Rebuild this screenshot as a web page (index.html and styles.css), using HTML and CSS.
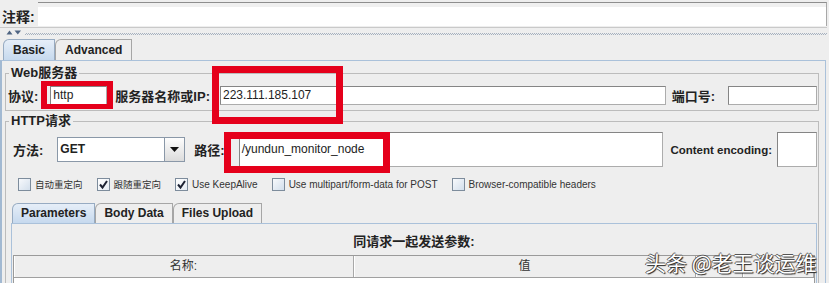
FILE: index.html
```html
<!DOCTYPE html>
<html lang="zh-CN">
<head>
    <meta charset="UTF-8">
    <meta name="viewport" content="width=device-width, initial-scale=1.0">
    <title>HTTP请求</title>
    <link rel="stylesheet" href="styles.css">
</head>
<body>
    <div class="app">
        <div class="note-row">
            <span class="note-label">注释:</span>
            <div class="note-field"></div>
        </div>

        <div class="splitter">
            <svg class="split-arrows" width="16" height="5" viewBox="0 0 16 5">
                <path d="M0.5 4.5 L3.5 0.5 L6.5 4.5 Z"/>
                <path d="M8.5 0.5 L15 0.5 L11.75 4.5 Z"/>
            </svg>
            <div class="split-dots"></div>
        </div>

        <div class="tabs">
            <div class="tab active">Basic</div>
            <div class="tab">Advanced</div>
        </div>

        <div class="tab-panel">
            <fieldset class="group">
                <legend>Web服务器</legend>
                <div class="row server-row">
                    <label>协议:</label>
                    <div class="field f-protocol">http</div>
                    <label class="l-server">服务器名称或IP:</label>
                    <div class="field f-server">223.111.185.107</div>
                    <label class="l-port">端口号:</label>
                    <div class="field f-port"></div>
                </div>
            </fieldset>

            <fieldset class="group group-request">
                <legend>HTTP请求</legend>
                <div class="row request-row">
                    <label>方法:</label>
                    <div class="combo">
                        <span class="combo-value">GET</span>
                        <span class="combo-btn">
                            <svg width="9" height="5" viewBox="0 0 9 5"><path d="M0 0 L9 0 L4.5 5 Z"/></svg>
                        </span>
                    </div>
                    <label class="l-path">路径:</label>
                    <div class="field f-path">/yundun_monitor_node</div>
                    <label class="l-encoding">Content encoding:</label>
                    <div class="field f-encoding"></div>
                </div>

                <div class="checks">
                    <span class="check"><span class="box"></span><span class="cjk">自动重定向</span></span>
                    <span class="check"><span class="box checked"><svg width="11" height="11" viewBox="0 0 11 11"><path d="M2 5.5 L4.5 8.5 L9 2"/></svg></span><span class="cjk">跟随重定向</span></span>
                    <span class="check"><span class="box checked"><svg width="11" height="11" viewBox="0 0 11 11"><path d="M2 5.5 L4.5 8.5 L9 2"/></svg></span>Use KeepAlive</span>
                    <span class="check"><span class="box"></span>Use multipart/form-data for POST</span>
                    <span class="check"><span class="box"></span>Browser-compatible headers</span>
                </div>

                <div class="tabs sub-tabs">
                    <div class="tab active">Parameters</div>
                    <div class="tab">Body Data</div>
                    <div class="tab">Files Upload</div>
                </div>

                <div class="sub-panel">
                    <div class="params-title">同请求一起发送参数:</div>
                    <div class="table">
                        <div class="thead">
                            <div>名称:</div>
                            <div>值</div>
                            <div></div>
                            <div></div>
                        </div>
                    </div>
                </div>
            </fieldset>
        </div>

        <!-- annotation boxes drawn over the form -->
        <div class="mark mark-protocol"></div>
        <div class="mark mark-server"></div>
        <div class="mark mark-path"></div>
        <div class="watermark">头条 @老王谈运维</div>
    </div>
</body>
</html>
```

FILE: styles.css
```css
* {
    box-sizing: border-box;
}
body {
    margin: 0;
    background: #eeeeee;
    color: #222;
    font-family: "Liberation Sans", "Noto Sans CJK SC", sans-serif;
    overflow: hidden;
}
.app {
    position: relative;
    width: 827px;
    height: 283px;
    overflow: hidden;
}

/* comment line */
.note-row {
    display: flex;
    height: 27px;
}
.note-label {
    width: 38px;
    padding-left: 2px;
    margin-top: 9px;
    font-size: 14px;
    font-weight: bold;
    line-height: 16px;
}
.note-field {
    flex: 1;
    margin-top: 2px;
    height: 24px;
    border-top: 1px solid #8e8e8e;
    border-right: 1px solid #a8a8a8;
    background: linear-gradient(#f0f0f0 0 4px, #fff 4px);
}

/* splitter */
.splitter {
    display: flex;
    align-items: center;
    height: 10px;
    border-top: 1px solid #c9c9c9;
    padding-left: 6px;
}
.split-arrows path {
    fill: #4f6482;
}
.split-dots {
    flex: 1;
    height: 2px;
    margin: 2px 0 0 3px;
    background: repeating-conic-gradient(#a6b1bf 0 25%, transparent 0 50%) 0 0 / 2px 2px;
}

/* tabs */
.tabs {
    display: flex;
    height: 21px;
    margin-top: 2px;
    padding-left: 3px;
}
.tab {
    padding: 0 9px;
    font-size: 12px;
    font-weight: bold;
    line-height: 20px;
    color: #222;
    background: #eeeeee;
    border: 1px solid #a6a6a6;
    border-bottom: none;
    border-top-left-radius: 6px;
}
.tab.active {
    background: linear-gradient(#e6eef8, #c6d9ee);
    border-color: #97abc2;
}
.tab-panel {
    height: 240px;
    margin-right: 1px;
    padding: 0 6px 0 3px;
    border: 1px solid #aac1da;
    border-left: 2px solid #a2b9d2;
}

/* titled groups */
.group {
    margin: 5px 0 0;
    padding: 0;
    min-width: 0;
    border: 1px solid #bcbcbc;
}
.group-request {
    margin-top: 3px;
    height: 200px;
}
.group legend {
    margin-left: 3px;
    padding: 0 2px;
    font-size: 13px;
    font-weight: bold;
    line-height: 14px;
}
.row {
    display: flex;
    align-items: center;
}
.row label {
    font-size: 13px;
    font-weight: bold;
    white-space: nowrap;
}
.field {
    height: 19px;
    padding-left: 2px;
    background: #fff;
    border: 1px solid #acacac;
    border-top-color: #858585;
    border-left-color: #858585;
    font-size: 12px;
    line-height: 17px;
    color: #222;
    white-space: nowrap;
}

.server-row {
    height: 30px;
    padding: 6px 1px 5px 2px;
}
.f-protocol {
    width: 57px;
    margin-left: 12px;
}
.l-server {
    margin-left: 8px;
}
.f-server {
    flex: 1;
    margin-left: 10px;
}
.l-port {
    margin-left: 6px;
}
.f-port {
    width: 89px;
    margin-left: 13px;
}

.request-row {
    height: 35px;
    margin-top: 4px;
    padding: 0 1px 0 7px;
}
.combo {
    display: flex;
    width: 128px;
    height: 25px;
    margin-left: 14px;
    background: #fff;
    border: 1px solid #8a98a8;
}
.combo-value {
    flex: 1;
    padding-left: 2px;
    font-size: 12px;
    font-weight: bold;
    line-height: 23px;
}
.combo-btn {
    display: flex;
    align-items: center;
    justify-content: center;
    width: 20px;
    border-left: 1px solid #8a98a8;
    background: linear-gradient(#fdfdfd, #dcdcdc);
}
.combo-btn path {
    fill: #111;
}
.l-path {
    margin-left: 9px;
}
.f-path {
    flex: 1;
    height: 35px;
    margin-left: 14px;
    line-height: 33px;
}
.row .l-encoding {
    margin-left: 7px;
    font-size: 11.5px;
}
.f-encoding {
    width: 40px;
    height: 35px;
    margin-left: 5px;
}

/* check boxes */
.checks {
    display: flex;
    align-items: center;
    gap: 14px;
    height: 16px;
    margin-top: 9px;
    padding-left: 12px;
}
.check {
    display: flex;
    align-items: center;
    gap: 4px;
    font-size: 10px;
    color: #333;
    white-space: nowrap;
}
.check .cjk {
    font-size: 9.5px;
}
.box {
    display: flex;
    align-items: center;
    justify-content: center;
    width: 13px;
    height: 13px;
    border: 1px solid #7d8c9c;
    background: linear-gradient(135deg, #f7f9fc, #d3dfec);
}
.box.checked {
    background: linear-gradient(135deg, #ffffff, #e4ebf3);
}
.box path {
    fill: none;
    stroke: #1c2233;
    stroke-width: 2;
}

/* parameter tabs */
.sub-tabs {
    height: 20px;
    margin-top: 11px;
    padding-left: 6px;
}
.sub-tabs .tab {
    padding: 0 8px;
    line-height: 19px;
}
.sub-panel {
    height: 100px;
    margin: 0 1px 0 5px;
    padding: 0 1px;
    border: 1px solid #aac1da;
}
.params-title {
    padding-top: 10px;
    font-size: 13px;
    font-weight: bold;
    line-height: 16px;
    text-align: center;
}
.table {
    height: 60px;
    margin-top: 5px;
    background: #fff;
    border: 1px solid #9a9a9a;
}
.thead {
    display: grid;
    grid-template-columns: 340px 342px 47px 1fr;
    height: 22px;
    background: #eeeeee;
    border-bottom: 1px solid #a0a0a0;
}
.thead div {
    font-size: 12px;
    line-height: 21px;
    text-align: center;
    color: #333;
    border-right: 1px solid #a8a8a8;
    box-shadow: inset 1px 0 #fff;
}

/* overlays */
.mark {
    position: absolute;
    border: 6px solid #e5001b;
}
.mark-protocol {
    left: 41px;
    top: 81px;
    width: 72px;
    height: 28px;
    border-width: 5px 6px;
}
.mark-server {
    left: 212px;
    top: 66px;
    width: 131px;
    height: 58px;
    border-width: 7px;
}
.mark-path {
    left: 224px;
    top: 132px;
    width: 166px;
    height: 41px;
    border-width: 7px;
}
.watermark {
    position: absolute;
    left: 645px;
    top: 248px;
    font-family: "Noto Sans CJK SC", sans-serif;
    font-size: 21px;
    line-height: 28px;
    color: #fff;
    white-space: nowrap;
    text-shadow: 1px 1px 1px #222, -1px 0 0 #555, 0 -1px 0 #555;
}
```
